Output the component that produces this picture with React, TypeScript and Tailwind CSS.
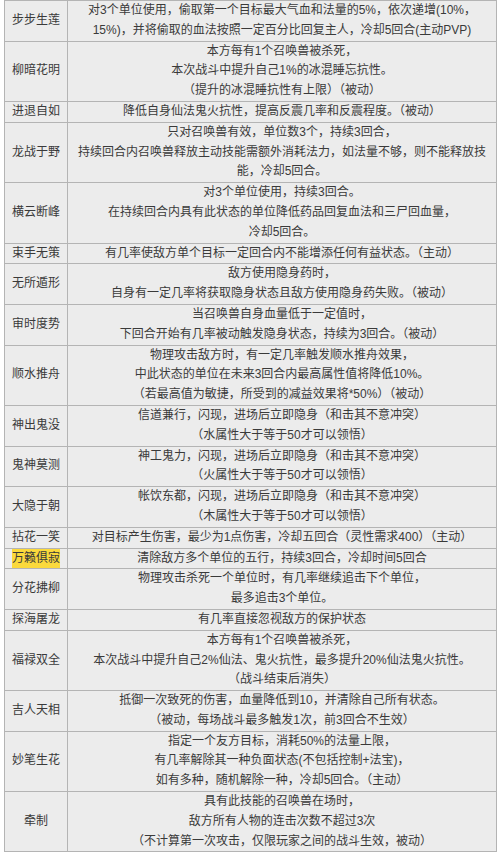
import React from "react";

interface SkillRow {
  name: string;
  lines: string[];
  highlight?: boolean;
}

const skills: SkillRow[] = [
  {
    name: "步步生莲",
    lines: [
      "对3个单位使用，偷取第一个目标最大气血和法量的5%，依次递增(10%，",
      "15%)，并将偷取的血法按照一定百分比回复主人，冷却5回合(主动PVP)",
    ],
  },
  {
    name: "柳暗花明",
    lines: [
      "本方每有1个召唤兽被杀死，",
      "本次战斗中提升自己1%的冰混睡忘抗性。",
      "（提升的冰混睡抗性有上限）（被动）",
    ],
  },
  {
    name: "进退自如",
    lines: ["降低自身仙法鬼火抗性，提高反震几率和反震程度。（被动）"],
  },
  {
    name: "龙战于野",
    lines: [
      "只对召唤兽有效，单位数3个，持续3回合，",
      "持续回合内召唤兽释放主动技能需额外消耗法力，如法量不够，则不能释放技",
      "能，冷却5回合。",
    ],
  },
  {
    name: "横云断峰",
    lines: [
      "对3个单位使用，持续3回合。",
      "在持续回合内具有此状态的单位降低药品回复血法和三尸回血量，",
      "冷却5回合。",
    ],
  },
  {
    name: "束手无策",
    lines: ["有几率使敌方单个目标一定回合内不能增添任何有益状态。（主动）"],
  },
  {
    name: "无所遁形",
    lines: [
      "敌方使用隐身药时，",
      "自身有一定几率将获取隐身状态且敌方使用隐身药失败。（被动）",
    ],
  },
  {
    name: "审时度势",
    lines: [
      "当召唤兽自身血量低于一定值时，",
      "下回合开始有几率被动触发隐身状态，持续为3回合。（被动）",
    ],
  },
  {
    name: "顺水推舟",
    lines: [
      "物理攻击敌方时，有一定几率触发顺水推舟效果，",
      "中此状态的单位在未来3回合内最高属性值将降低10%。",
      "（若最高值为敏捷，所受到的减益效果将*50%）（被动）",
    ],
  },
  {
    name: "神出鬼没",
    lines: [
      "信道兼行，闪现，进场后立即隐身（和击其不意冲突）",
      "（水属性大于等于50才可以领悟）",
    ],
  },
  {
    name: "鬼神莫测",
    lines: [
      "神工鬼力，闪现，进场后立即隐身（和击其不意冲突）",
      "（火属性大于等于50才可以领悟）",
    ],
  },
  {
    name: "大隐于朝",
    lines: [
      "帐饮东都，闪现，进场后立即隐身（和击其不意冲突）",
      "（木属性大于等于50才可以领悟）",
    ],
  },
  {
    name: "拈花一笑",
    lines: ["对目标产生伤害，最少为1点伤害，冷却五回合（灵性需求400）（主动）"],
  },
  {
    name: "万籁俱寂",
    highlight: true,
    lines: ["清除敌方多个单位的五行，持续3回合，冷却时间5回合"],
  },
  {
    name: "分花拂柳",
    lines: [
      "物理攻击杀死一个单位时，有几率继续追击下个单位，",
      "最多追击3个单位。",
    ],
  },
  {
    name: "探海屠龙",
    lines: ["有几率直接忽视敌方的保护状态"],
  },
  {
    name: "福禄双全",
    lines: [
      "本方每有1个召唤兽被杀死，",
      "本次战斗中提升自己2%仙法、鬼火抗性，最多提升20%仙法鬼火抗性。",
      "（战斗结束后消失）",
    ],
  },
  {
    name: "吉人天相",
    lines: [
      "抵御一次致死的伤害，血量降低到10，并清除自己所有状态。",
      "（被动，每场战斗最多触发1次，前3回合不生效）",
    ],
  },
  {
    name: "妙笔生花",
    lines: [
      "指定一个友方目标，消耗50%的法量上限，",
      "有几率解除其一种负面状态(不包括控制+法宝)，",
      "如有多种，随机解除一种，冷却5回合。（主动）",
    ],
  },
  {
    name: "牵制",
    lines: [
      "具有此技能的召唤兽在场时，",
      "敌方所有人物的连击次数不超过3次",
      "（不计算第一次攻击，仅限玩家之间的战斗生效，被动）",
    ],
  },
];

export default function App() {
  return (
    <div
      className="w-[500px] h-[856px] bg-white text-[12px] leading-[19.8px] text-[#3a3a3a]"
      style={{ fontFamily: '"Liberation Sans", "Noto Sans CJK SC", sans-serif' }}
    >
      <div className="ml-[4px] w-[493px] border border-[#b4b4b4] bg-[#ececec]">
        {skills.map((row, i) => (
          <div
            key={row.name}
            className={`flex ${i > 0 ? "border-t border-[#b4b4b4]" : ""}`}
          >
            <div className="w-[63px] shrink-0 flex items-center justify-center border-r border-[#b4b4b4]">
              <span className={row.highlight ? "bg-[#fbd93c]" : ""}>{row.name}</span>
            </div>
            <div className="flex-1 flex flex-col items-center text-center">
              {row.lines.map((line) => (
                <div key={line} className="whitespace-nowrap">
                  {line}
                </div>
              ))}
            </div>
          </div>
        ))}
      </div>
    </div>
  );
}
